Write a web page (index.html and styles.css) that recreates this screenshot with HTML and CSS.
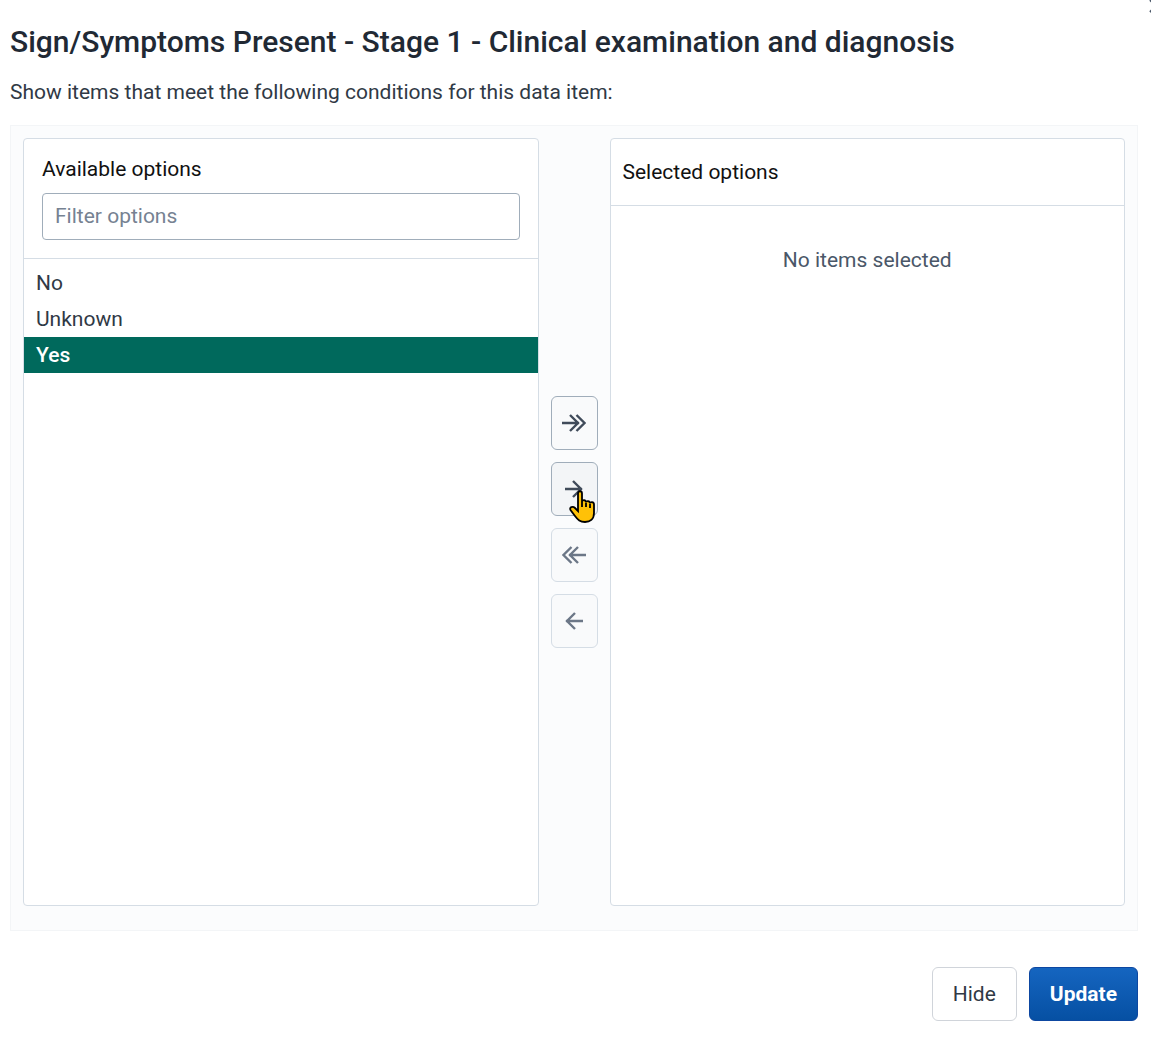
FILE: index.html
```html
<!DOCTYPE html>
<html lang="en">
<head>
<meta charset="utf-8">
<meta name="viewport" content="width=device-width, initial-scale=1">
<title>Sign/Symptoms Present</title>
<link rel="stylesheet" href="styles.css">
</head>
<body>
<main class="modal">
  <button class="close" type="button" aria-label="Close">
    <svg viewBox="0 0 14 14" width="14" height="14"><path d="M1 1L13 13M13 1L1 13"/></svg>
  </button>
  <h1 class="title">Sign/Symptoms Present - Stage 1 - Clinical examination and diagnosis</h1>
  <p class="intro">Show items that meet the following conditions for this data item:</p>

  <div class="transfer">
    <section class="box">
      <div class="box-header box-header-filter">
        <label for="filter">Available options</label>
        <input id="filter" class="filter" type="text" placeholder="Filter options">
      </div>
      <ul class="options" role="listbox" aria-label="Available options" aria-multiselectable="true">
        <li class="option" role="option" aria-selected="false">No</li>
        <li class="option" role="option" aria-selected="false">Unknown</li>
        <li class="option option-highlighted" role="option" aria-selected="true">Yes</li>
      </ul>
    </section>

    <div class="actions">
      <button class="action" type="button" aria-label="Select all">
        <svg viewBox="0 0 24 24" width="24" height="24"><path d="M0 12H17M8 4L16 12L8 20M14.500 4L22.500 12L14.500 20"/></svg>
      </button>
      <button class="action action-hover" type="button" aria-label="Select">
        <svg viewBox="0 0 24 24" width="24" height="24"><path d="M3 12H20M11 4L19 12L11 20"/></svg>
        <svg class="pointer" viewBox="0 0 28 34" width="28" height="34"><path d="M9 3.500C9 .5 13 .5 13 3.500V12C13 9.500 17 9.500 17 12.500C17 10.500 21 10.500 21 13.500C21 11.500 25 11.500 25 14.500V23C25 29 21 32 16 32C11 32 9 30 6 26L1.500 20C0 17 4 16 6 18L9 21Z"/><path d="M13 12V17M17 13V17M21 14V18"/></svg>
      </button>
      <button class="action" type="button" aria-label="Deselect all" disabled>
        <svg viewBox="0 0 24 24" width="24" height="24"><path d="M24 12H7M16 4L8 12L16 20M9.500 4L1.500 12L9.500 20"/></svg>
      </button>
      <button class="action" type="button" aria-label="Deselect" disabled>
        <svg viewBox="0 0 24 24" width="24" height="24"><path d="M21 12H4M13 4L5 12L13 20"/></svg>
      </button>
    </div>

    <section class="box">
      <h2 class="box-header">Selected options</h2>
      <p class="empty">No items selected</p>
    </section>
  </div>

  <div class="footer">
    <button class="button" type="button">Hide</button>
    <button class="button button-primary" type="button">Update</button>
  </div>
</main>
</body>
</html>
```
FILE: styles.css
```css
* {
  box-sizing: border-box;
}

body {
  margin: 0;
  background: #fff;
  color: #212934;
  font: 21px/28px Roboto, sans-serif;
}

button,
input {
  font: inherit;
}

svg {
  fill: none;
  stroke: currentColor;
  stroke-width: 2;
}

.modal {
  position: relative;
  display: flex;
  flex-direction: column;
  min-height: 100vh;
  padding: 24px 13px 25px 10px;
  overflow: hidden;
}

.close {
  position: absolute;
  top: -1px;
  right: -12px;
  display: flex;
  padding: 0;
  border: 0;
  background: none;
  color: #4a5768;
}

.title {
  margin: 0 0 18px;
  font-size: 30px;
  font-weight: 500;
  line-height: 36px;
}

.intro {
  margin: 0 0 19px;
  color: #303945;
}

.transfer {
  flex: 1;
  display: grid;
  grid-template-columns: 1fr auto 1fr;
  gap: 12px;
  padding: 12px 12px 24px;
  border: 1px solid #f3f5f7;
  background: #fbfcfd;
}

.box {
  border: 1px solid #d5dde5;
  border-radius: 4px;
  background: #fff;
}

.box-header {
  margin: 0;
  padding: 19px 12px;
  border-bottom: 1px solid #d5dde5;
  color: #111;
  font-size: 21px;
  font-weight: 400;
}

.box-header-filter {
  display: grid;
  gap: 10px;
  padding: 16px 18px 18px;
}

.filter {
  width: 100%;
  height: 47px;
  padding: 0 12px 2px;
  border: 1px solid #a0adba;
  border-radius: 4px;
  background: #fff;
  color: #212934;
}

.filter::placeholder {
  color: #768292;
  opacity: 1;
}

.options {
  margin: 0;
  padding: 6px 0;
  list-style: none;
}

.option {
  padding: 4px 12px;
  color: #303945;
}

.option-highlighted {
  background: #00695c;
  color: #fff;
  font-weight: 500;
}

.actions {
  display: flex;
  flex-direction: column;
  justify-content: center;
  gap: 12px;
}

.action {
  position: relative;
  display: flex;
  align-items: center;
  justify-content: center;
  width: 47px;
  height: 54px;
  padding: 0;
  border: 1px solid #a0adba;
  border-radius: 6px;
  background: #f9fafb;
  color: #404b5a;
}

.action svg {
  stroke-width: 2.4;
}

.action-hover {
  background: #f3f5f7;
}

.action:disabled {
  border-color: #d5dde5;
  color: #6c7787;
}

.action .pointer {
  position: absolute;
  top: 27px;
  left: 17px;
  fill: #ffc107;
  stroke: #000;
  stroke-width: 1.8;
}

.empty {
  margin: 40px 0 0;
  color: #4a5768;
  text-align: center;
}

.footer {
  display: flex;
  justify-content: flex-end;
  gap: 12px;
  margin-top: 36px;
}

.button {
  height: 54px;
  padding: 0 20px;
  border: 1px solid #d0d4da;
  border-radius: 6px;
  background: #fff;
  color: #303945;
}

.button-primary {
  border-color: #0d47a1;
  background: linear-gradient(#1565c0, #0650a3);
  color: #fff;
  font-weight: 700;
}
```
